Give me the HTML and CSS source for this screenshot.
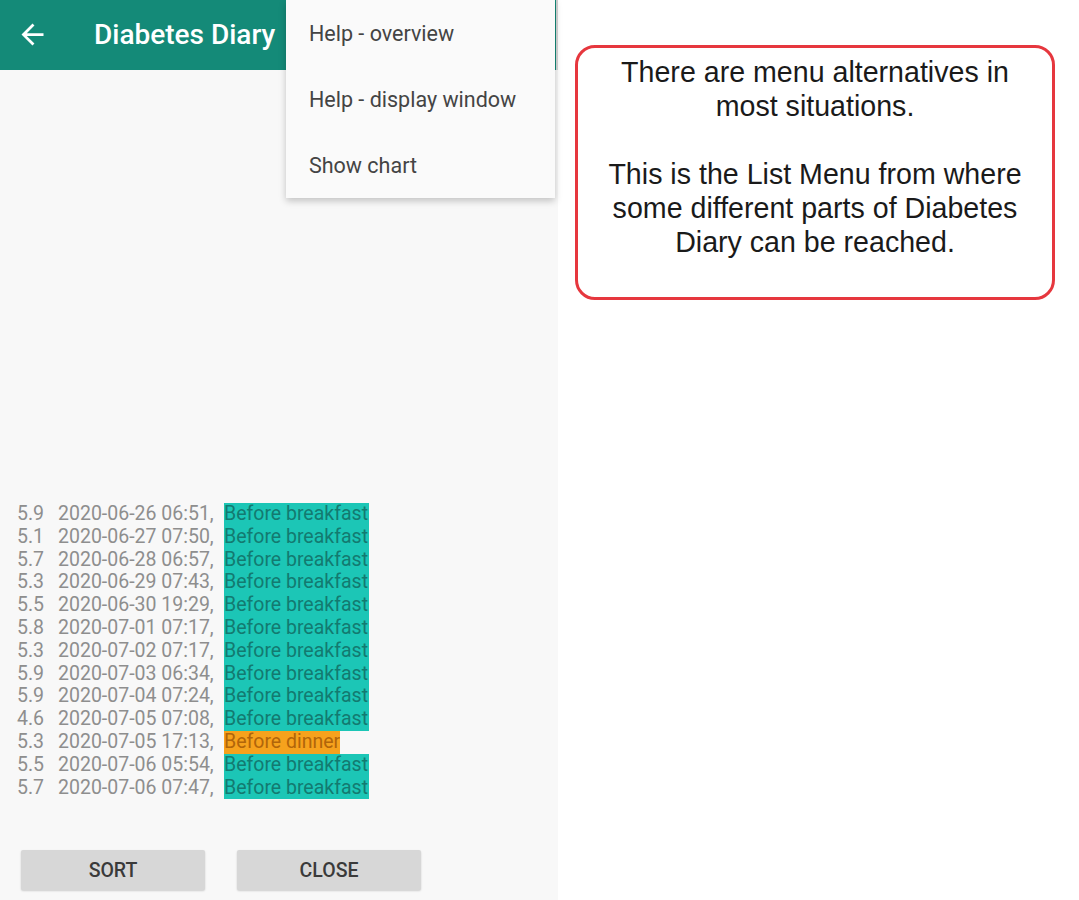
FILE: index.html
```html
<!DOCTYPE html>
<html lang="en">
<head>
<meta charset="utf-8">
<title>Diabetes Diary - List Menu</title>
<link rel="stylesheet" href="styles.css">
</head>
<body>
<div class="page">
  <div class="phone">
    <div class="appbar">
      <svg class="back" viewBox="0 0 24 24" width="33" height="33" aria-hidden="true">
        <path d="M20 11H7.83l5.59-5.59L12 4l-8 8 8 8 1.41-1.41L7.83 13H20v-2z" fill="#ffffff"/>
      </svg>
      <span class="title">Diabetes Diary</span>
    </div>

    <div class="menu">
      <div class="menu-item">Help - overview</div>
      <div class="menu-item">Help - display window</div>
      <div class="menu-item">Show chart</div>
    </div>
    <div class="edge"></div>

    <div class="list">
      <div class="row"><span class="num">5.9</span><span class="date">2020-06-26 06:51,</span><span class="tag tag-bb">Before breakfast</span></div>
      <div class="row"><span class="num">5.1</span><span class="date">2020-06-27 07:50,</span><span class="tag tag-bb">Before breakfast</span></div>
      <div class="row"><span class="num">5.7</span><span class="date">2020-06-28 06:57,</span><span class="tag tag-bb">Before breakfast</span></div>
      <div class="row"><span class="num">5.3</span><span class="date">2020-06-29 07:43,</span><span class="tag tag-bb">Before breakfast</span></div>
      <div class="row"><span class="num">5.5</span><span class="date">2020-06-30 19:29,</span><span class="tag tag-bb">Before breakfast</span></div>
      <div class="row"><span class="num">5.8</span><span class="date">2020-07-01 07:17,</span><span class="tag tag-bb">Before breakfast</span></div>
      <div class="row"><span class="num">5.3</span><span class="date">2020-07-02 07:17,</span><span class="tag tag-bb">Before breakfast</span></div>
      <div class="row"><span class="num">5.9</span><span class="date">2020-07-03 06:34,</span><span class="tag tag-bb">Before breakfast</span></div>
      <div class="row"><span class="num">5.9</span><span class="date">2020-07-04 07:24,</span><span class="tag tag-bb">Before breakfast</span></div>
      <div class="row"><span class="num">4.6</span><span class="date">2020-07-05 07:08,</span><span class="tag tag-bb">Before breakfast</span></div>
      <div class="row"><span class="num">5.3</span><span class="date">2020-07-05 17:13,</span><span class="tag tag-bd">Before dinner</span></div>
      <div class="row"><span class="num">5.5</span><span class="date">2020-07-06 05:54,</span><span class="tag tag-bb">Before breakfast</span></div>
      <div class="row"><span class="num">5.7</span><span class="date">2020-07-06 07:47,</span><span class="tag tag-bb">Before breakfast</span></div>
    </div>

    <div class="buttons">
      <button class="btn">SORT</button>
      <button class="btn">CLOSE</button>
    </div>
  </div>

  <div class="side">
    <div class="callout">
      <p class="callout-p">There are menu alternatives in<br>most situations.</p>
      <p class="callout-p">This is the List Menu from where<br>some different parts of Diabetes<br>Diary can be reached.</p>
    </div>
  </div>
</div>
</body>
</html>
```

FILE: styles.css
```css
html, body {
  margin: 0;
  padding: 0;
  background: #ffffff;
}

.page {
  display: flex;
  width: 1079px;
  height: 900px;
  overflow: hidden;
}

.phone {
  position: relative;
  width: 558px;
  height: 900px;
  background: #f8f8f8;
  display: flex;
  flex-direction: column;
  font-family: Roboto, "Noto Sans", sans-serif;
}

.appbar {
  height: 70px;
  background: #148a78;
  display: flex;
  align-items: center;
  padding-left: 16px;
  flex-shrink: 0;
}

.back {
  display: block;
  margin-top: -2px;
}

.title {
  margin-left: 45px;
  color: #ffffff;
  font-size: 28px;
  font-weight: 500;
  margin-top: -2px;
}

.menu {
  position: absolute;
  top: 0;
  left: 286px;
  width: 269px;
  background: #fafafa;
  box-shadow: 0 3px 7px rgba(0, 0, 0, 0.22);
  z-index: 2;
}

.menu-item {
  height: 66px;
  line-height: 68px;
  padding-left: 23px;
  font-size: 21.5px;
  color: #444444;
}

.edge {
  position: absolute;
  top: 0;
  left: 556px;
  width: 2px;
  height: 70px;
  background: #c9c9c9;
  z-index: 3;
}

.list {
  margin-top: 433px;
  display: flex;
  flex-direction: column;
}

.row {
  display: flex;
  height: 22.8px;
  line-height: 22.8px;
  padding-left: 17px;
  font-size: 19.5px;
  color: #8e8e8e;
  white-space: nowrap;
}

.num {
  width: 41px;
  flex-shrink: 0;
}

.date {
  width: 166px;
  flex-shrink: 0;
}

.tag {
  display: block;
  overflow: hidden;
}

.tag-bb {
  width: 145px;
  background: #1cc6b6;
  color: #137a70;
}

.tag-bd {
  background: #f6a21d;
  color: #b1650a;
}

.buttons {
  display: flex;
  gap: 32px;
  margin-top: 51px;
  padding-left: 21px;
}

.btn {
  width: 184px;
  height: 40px;
  border: none;
  border-radius: 2px;
  background: #d7d7d7;
  box-shadow: 0 1px 2px rgba(0, 0, 0, 0.18);
  font-family: Roboto, "Noto Sans", sans-serif;
  font-size: 19.5px;
  font-weight: 500;
  color: #3a3a3a;
  padding: 0;
}

.side {
  flex: 1;
  background: #ffffff;
  padding-top: 45px;
  padding-left: 17px;
}

.callout {
  box-sizing: border-box;
  width: 480px;
  height: 255px;
  border: 3px solid #e6373e;
  border-radius: 20px;
  padding-top: 7px;
  text-align: center;
  font-family: "Liberation Sans", Arial, sans-serif;
  font-size: 28.6px;
  line-height: 34px;
  color: #1a1a1a;
}

.callout-p {
  margin: 0;
}

.callout-p + .callout-p {
  margin-top: 34px;
}
```
